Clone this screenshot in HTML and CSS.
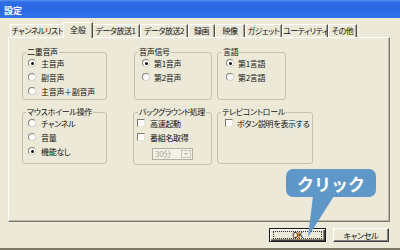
FILE: index.html
```html
<!DOCTYPE html>
<html lang="ja">
<head>
<meta charset="utf-8">
<title>設定</title>
<link rel="stylesheet" href="styles.css">
</head>
<body>
<div class="window">
  <div class="titlebar"><span class="title">設定</span></div>
  <div class="content">
    <div class="tabs">
      <div class="tab t1">チャンネルリスト</div>
      <div class="tab t2 active">全般</div>
      <div class="tab t3">データ放送1</div>
      <div class="tab t4">データ放送2</div>
      <div class="tab t5">録画</div>
      <div class="tab t6">映像</div>
      <div class="tab t7">ガジェット</div>
      <div class="tab t8">ユーティリティ</div>
      <div class="tab t9">その他</div>
    </div>
    <div class="panel">
      <div class="groups">
        <div class="group g-a">
          <div class="legend">二重音声</div>
          <div class="opt"><span class="radio on"></span>主音声</div>
          <div class="opt"><span class="radio"></span>副音声</div>
          <div class="opt"><span class="radio"></span>主音声＋副音声</div>
        </div>
        <div class="group g-b">
          <div class="legend">音声信号</div>
          <div class="opt"><span class="radio on"></span>第1音声</div>
          <div class="opt"><span class="radio"></span>第2音声</div>
        </div>
        <div class="group g-c">
          <div class="legend">言語</div>
          <div class="opt"><span class="radio on"></span>第1言語</div>
          <div class="opt"><span class="radio"></span>第2言語</div>
        </div>
        <div class="group g-d">
          <div class="legend">マウスホイール操作</div>
          <div class="opt"><span class="radio"></span>チャンネル</div>
          <div class="opt"><span class="radio"></span>音量</div>
          <div class="opt"><span class="radio on"></span>機能なし</div>
        </div>
        <div class="group g-e">
          <div class="legend">バックグラウンド処理</div>
          <div class="opt"><span class="check"></span>高速起動</div>
          <div class="opt"><span class="check"></span>番組名取得</div>
          <div class="combo"><span class="combo-text">30分</span><span class="combo-btn"></span></div>
        </div>
        <div class="group g-f">
          <div class="legend">テレビコントロール</div>
          <div class="opt"><span class="check"></span>ボタン説明を表示する</div>
        </div>
      </div>
    </div>
    <div class="buttons">
      <button class="btn btn-ok"><span class="focus">OK</span></button>
      <button class="btn btn-cancel">キャンセル</button>
    </div>
  </div>
  <div class="callout">クリック</div>
  <svg class="tail" width="40" height="45" viewBox="0 0 40 45"><polygon points="13,0 34,0 8,41" fill="#5f98c8"/></svg>
</div>
</body>
</html>
```
FILE: styles.css
```css
* { box-sizing: border-box; }
html, body { margin: 0; padding: 0; }
body {
  width: 400px;
  height: 250px;
  overflow: hidden;
  background: #ECE9D8;
  font-family: "Noto Sans CJK JP", "Noto Sans", sans-serif;
  font-size: 8px;
  letter-spacing: -0.3px;
  color: #111;
  font-feature-settings: "palt";
}
.window {
  position: relative;
  width: 400px;
  height: 250px;
  display: flex;
  flex-direction: column;
  border-bottom: 2px solid #7b7868;
}
.titlebar {
  height: 18px;
  flex: none;
  background: linear-gradient(to bottom, #5a94f2 0, #2f6de6 2px, #2a68e4 50%, #3573ea 100%);
  display: flex;
  align-items: center;
  padding: 3px 0 0 4px;
}
.title {
  color: #fff;
  font-weight: bold;
  font-size: 9px;
  letter-spacing: 0;
  line-height: 10px;
}
.content {
  flex: 1;
  display: flex;
  flex-direction: column;
  padding: 4px 10px 0 8px;
}
.tabs {
  display: flex;
  align-items: flex-end;
  height: 15px;
  margin-left: 2px;
}
.tab {
  height: 13px;
  border-top: 1px solid #fff;
  border-left: 1px solid #fff;
  border-right: 1px solid #56544a;
  box-shadow: inset -1px 0 #a8a594;
  text-align: center;
  letter-spacing: -0.5px;
  line-height: 12px;
  white-space: nowrap;
  overflow: hidden;
  flex: none;
}
.tab.active {
  height: 16px;
  margin: 0 -2px -1px;
  position: relative;
  z-index: 1;
  background: #ECE9D8;
  line-height: 13px;
  letter-spacing: 0;
}
.t1 { width: 55px; }
.t2 { width: 30px; }
.t3 { width: 49px; }
.t4 { width: 48px; }
.t5 { width: 27px; }
.t6 { width: 30px; }
.t7 { width: 37px; }
.t8 { width: 46px; }
.t9 { width: 29px; }
.panel {
  height: 185px;
  flex: none;
  border-top: 1px solid #fff;
  border-left: 1px solid #fff;
  border-right: 1px solid #7c796b;
  border-bottom: 1px solid #7c796b;
  box-shadow: inset -1px -1px #b9b6a6;
  padding: 14px 0 0 13px;
}
.groups {
  display: grid;
  grid-template-columns: 111px 84px auto;
  row-gap: 12px;
  align-items: start;
}
.group {
  border: 1px solid #c4c1b1;
  border-radius: 3px;
}
.g-a { width: 85px; height: 48px; padding-left: 5px; }
.g-b { width: 78px; height: 48px; padding-left: 7px; margin-left: 1px; }
.g-c { width: 69px; height: 48px; padding-left: 8px; }
.g-d { width: 85px; height: 52px; padding-left: 5px; }
.g-e { width: 79px; height: 53px; padding-left: 3px; }
.g-f { width: 96px; height: 52px; padding-left: 7px; }
.legend {
  width: fit-content;
  margin: -6px 0 -1px -2px;
  padding: 0 1px;
  background: #ECE9D8;
  line-height: 10px;
  white-space: nowrap;
}
.g-b .legend, .g-c .legend, .g-f .legend { margin-left: -4px; }
.g-e .legend { margin-left: 1px; letter-spacing: -0.6px; }
.opt {
  display: flex;
  align-items: center;
  gap: 4px;
  height: 14px;
  white-space: nowrap;
}
.g-a .opt, .g-d .opt, .g-e .opt { gap: 5px; }
.radio {
  flex: none;
  width: 8px;
  height: 8px;
  border-radius: 50%;
  border: 1px solid;
  border-color: #86837a #d6d3c6 #d6d3c6 #86837a;
  background: #fff;
  display: flex;
  align-items: center;
  justify-content: center;
}
.radio.on::after {
  content: "";
  width: 3px;
  height: 3px;
  border-radius: 50%;
  background: #111;
}
.check {
  flex: none;
  width: 8px;
  height: 8px;
  background: #fff;
  border: 1px solid;
  border-color: #7f7c6e #e6e3d8 #e6e3d8 #7f7c6e;
}
.combo {
  display: flex;
  width: 41px;
  height: 12px;
  margin: 4px 0 0 15px;
  border: 1px solid #b3b0a0;
  background: #f3f1e8;
}
.combo-text {
  flex: 1;
  color: #aca899;
  line-height: 10px;
  padding-left: 2px;
}
.combo-btn {
  width: 10px;
  margin: 1px;
  border: 1px solid #c9c6b8;
  display: flex;
  align-items: center;
  justify-content: center;
}
.combo-btn::after {
  content: "";
  border-left: 2px solid transparent;
  border-right: 2px solid transparent;
  border-top: 2px solid #aca899;
}
.buttons {
  display: flex;
  justify-content: flex-end;
  gap: 7px;
  margin-top: 6px;
  padding-right: 1px;
}
.btn {
  height: 14px;
  padding: 0;
  font: inherit;
  letter-spacing: inherit;
  color: #111;
  background: #ECE9D8;
  border: 1px solid;
  border-color: #fff #404040 #404040 #fff;
  box-shadow: inset -1px -1px #808080;
  line-height: 11px;
}
.btn-ok {
  width: 57px;
  border: 1px solid #1a1a1a;
  box-shadow: inset 1px 1px #fff, inset -1px -1px #404040, inset -2px -2px #8a877a;
  padding: 2px 3px;
}
.btn-cancel { width: 56px; }
.focus {
  display: block;
  height: 100%;
  border: 1px dotted #333;
  line-height: 6px;
}
.callout {
  position: absolute;
  left: 286px;
  top: 169px;
  width: 90px;
  height: 28px;
  border-radius: 7px;
  background: #5f98c8;
  color: #fff;
  font-weight: bold;
  font-size: 17px;
  letter-spacing: 0;
  font-feature-settings: normal;
  display: flex;
  align-items: center;
  justify-content: center;
  line-height: 1;
}
.tail {
  position: absolute;
  left: 300px;
  top: 196px;
}
```
